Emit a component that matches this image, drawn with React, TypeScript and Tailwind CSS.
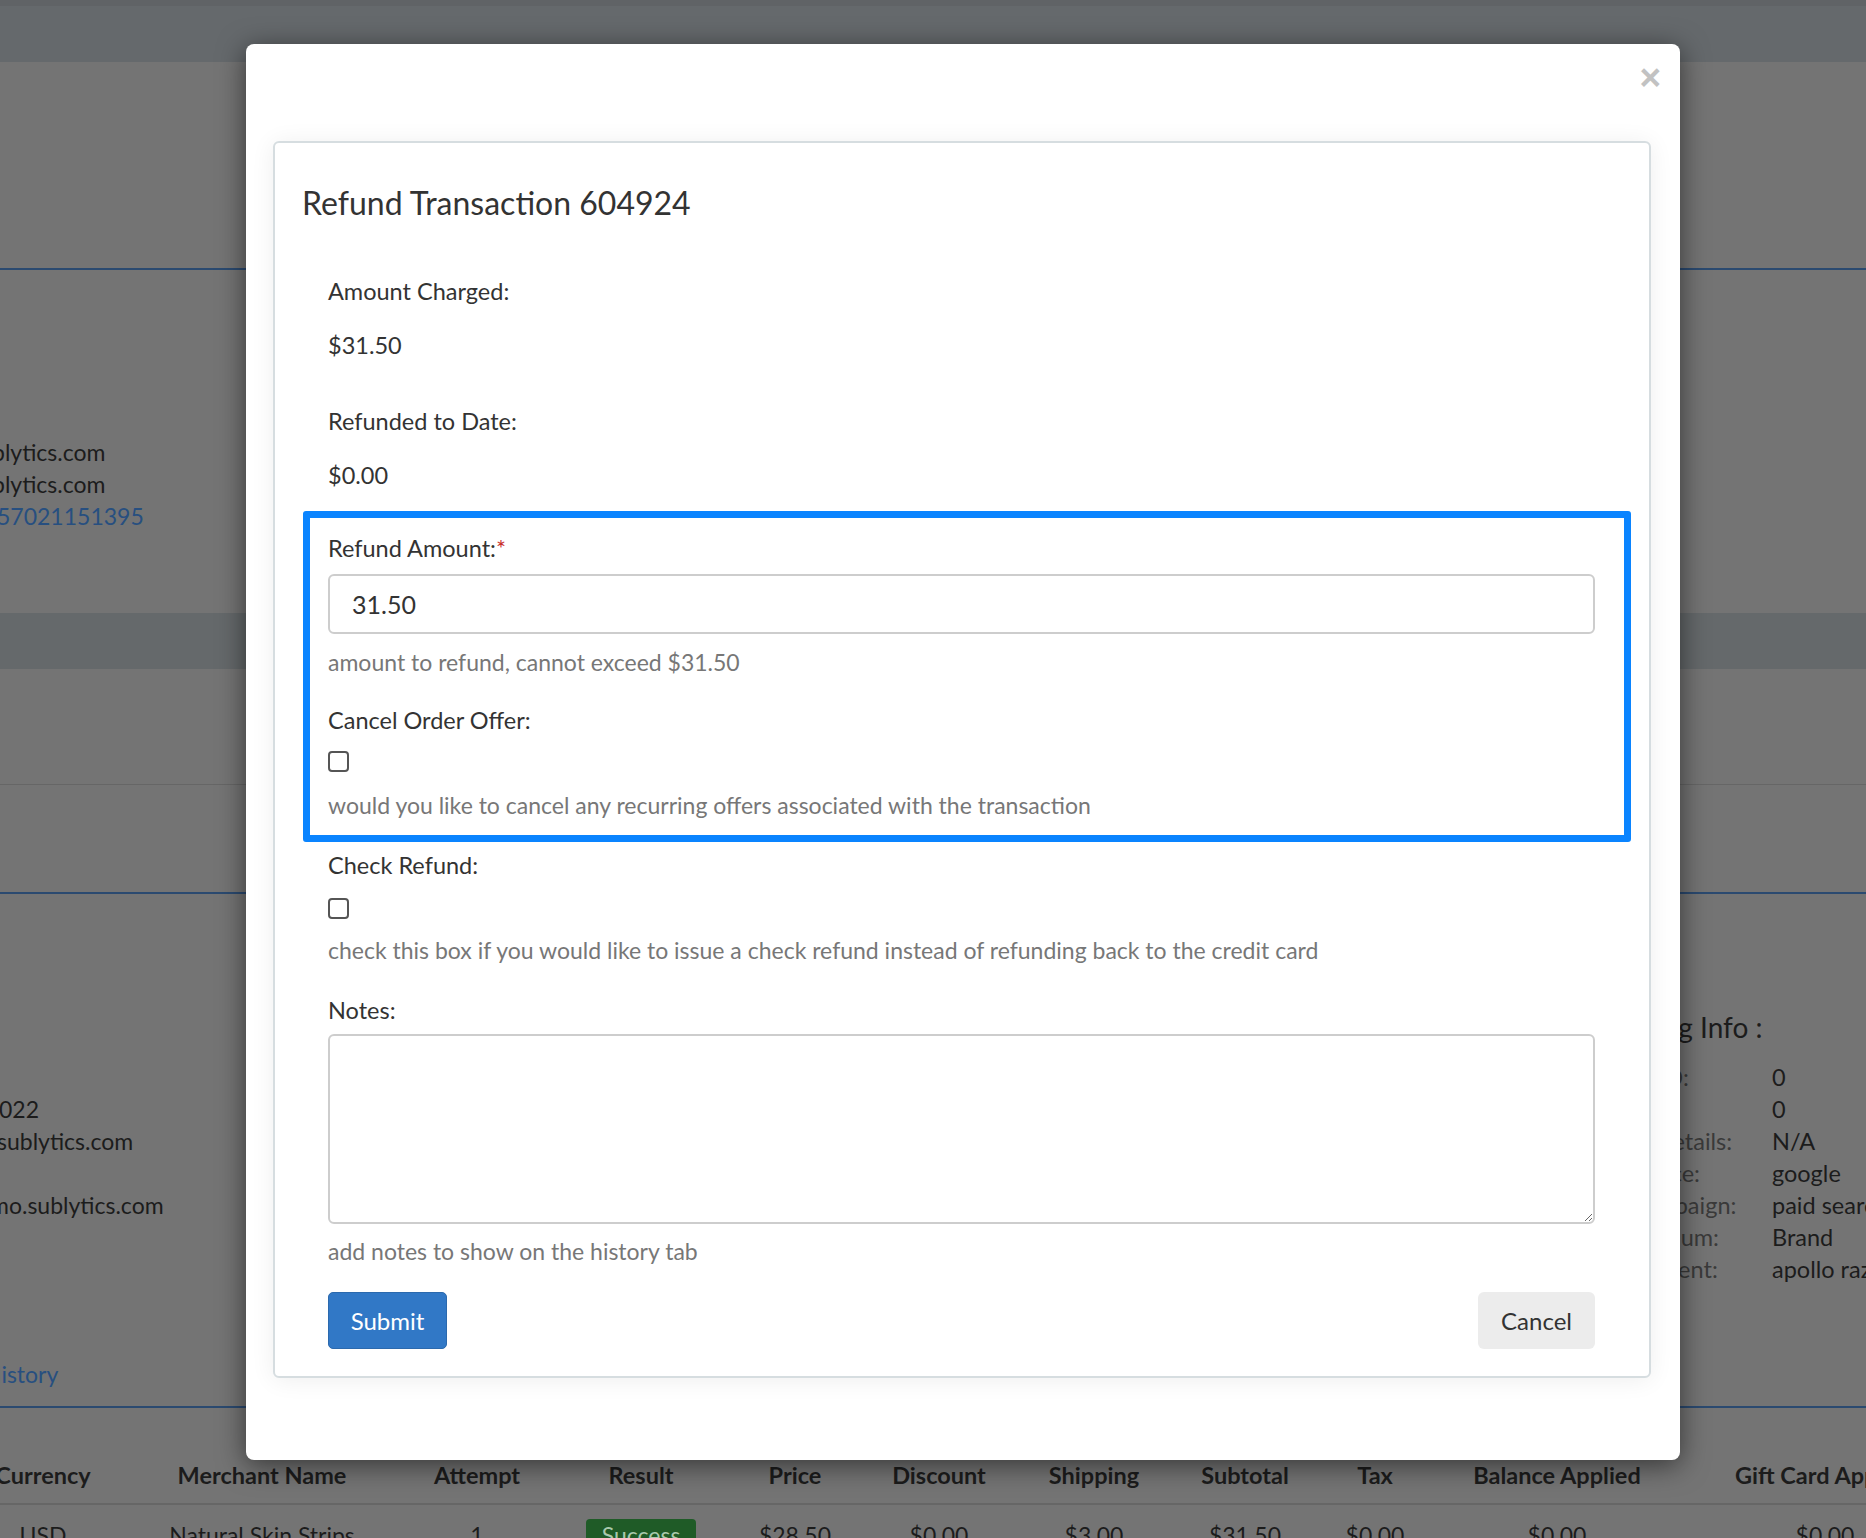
import React from "react";

const trackingRows: [string, string][] = [
  ["Referrer ID:", "0"],
  ["Sub ID:", "0"],
  ["Affiliate Details:", "N/A"],
  ["Lead Source:", "google"],
  ["UTM Campaign:", "paid search"],
  ["UTM Medium:", "Brand"],
  ["UTM Content:", "apollo razor"],
];

const columns: { title: string; value: string; w: string }[] = [
  { title: "Currency", value: "USD", w: "w-[218px]" },
  { title: "Merchant Name", value: "Natural Skin Strips", w: "w-[220px]" },
  { title: "Attempt", value: "1", w: "w-[210px]" },
  { title: "Result", value: "Success", w: "w-[118px]" },
  { title: "Price", value: "$28.50", w: "w-[190px]" },
  { title: "Discount", value: "$0.00", w: "w-[98px]" },
  { title: "Shipping", value: "$3.00", w: "w-[212px]" },
  { title: "Subtotal", value: "$31.50", w: "w-[90px]" },
  { title: "Tax", value: "$0.00", w: "w-[170px]" },
  { title: "Balance Applied", value: "$0.00", w: "w-[194px]" },
  { title: "Gift Card Applied", value: "$0.00", w: "w-[342px]" },
];

function BackgroundPage() {
  return (
    <div className="flex flex-col text-[23px] leading-[32px] text-[#1c1c1c]">
      <div className="h-[62px] border-t-[6px] border-[#606366] bg-[#65696c]" />
      <div className="h-[208px] border-b-2 border-[#2b4a70]" />

      <div className="h-[343px] pt-[166px]">
        <div className="-ml-[8px]">blytics.com</div>
        <div className="-ml-[8px]">blytics.com</div>
        <div className="-ml-[3px] text-[#274f80]">57021151395</div>
      </div>

      <div className="h-[56px] bg-[#65696b]" />
      <div className="h-[116px] border-b border-[#666666]" />
      <div className="h-[109px] border-b-2 border-[#2b4a70]" />

      <div className="flex border-b-2 border-[#2b4a70]">
        <div className="flex-1 pt-[199px] pb-[16px]">
          <div className="-ml-[1px]">022</div>
          <div className="-ml-[3px]">sublytics.com</div>
          <div className="h-[32px]" />
          <div className="-ml-[10px]">mo.sublytics.com</div>
          <div className="mt-[137px] -ml-[16px] text-[#274f80]">History</div>
        </div>
        <div className="w-[297px] pt-[115px]">
          <div className="ml-[22px] whitespace-nowrap text-[28px] leading-[36px]">Tracking Info :</div>
          <div className="mt-[16px] text-[23.5px] leading-[32px]">
            {trackingRows.map(([label, value]) => (
              <div key={label} className="flex">
                <div className="w-[203px] shrink-0 whitespace-nowrap text-[#3a3a3a]">{label}</div>
                <div className="whitespace-nowrap">{value}</div>
              </div>
            ))}
          </div>
        </div>
      </div>

      <div className="-ml-[66px] mt-[51px] flex border-b-2 border-[#666666] pb-[12px] text-[23.5px] font-bold">
        {columns.map((c) => (
          <div key={c.title} className={`${c.w} shrink-0 whitespace-nowrap text-center`}>
            {c.title}
          </div>
        ))}
      </div>
      <div className="-ml-[66px] flex pt-[14px]">
        {columns.map((c) => (
          <div key={c.title} className={`${c.w} flex shrink-0 justify-center whitespace-nowrap`}>
            {c.value === "Success" ? (
              <span className="h-[36px] rounded-[4px] bg-[#1f5b27] px-[16px] text-[#a9c9ad]">
                Success
              </span>
            ) : (
              <span>{c.value}</span>
            )}
          </div>
        ))}
      </div>
    </div>
  );
}

function Label({ children }: { children: React.ReactNode }) {
  return <div className="text-[23.5px] leading-[32px] text-[#333333]">{children}</div>;
}

function Help({ children, className = "" }: { children: React.ReactNode; className?: string }) {
  return (
    <div className={`text-[23px] leading-[32px] text-[#777777] ${className}`}>{children}</div>
  );
}

function Checkbox({ className = "" }: { className?: string }) {
  return (
    <input
      type="checkbox"
      className={`block h-[21px] w-[21px] appearance-none rounded-[4px] border-2 border-[#555555] bg-white ${className}`}
    />
  );
}

function RefundModal() {
  return (
    <div className="absolute left-[246px] top-[44px] w-[1434px] rounded-[8px] bg-white pb-[82px] pl-[27px] pr-[29px] shadow-[0_5px_28px_rgba(0,0,0,0.55)]">
      <div className="-mr-[10px] flex h-[97px] items-start justify-end pt-[15px]">
        <span className="font-['Liberation_Sans',sans-serif] text-[37px] font-bold leading-none text-[#c2c2c2]">
          ×
        </span>
      </div>

      <div className="rounded-[6px] border-2 border-[#d6dde0] bg-white pb-[27px] pl-[27px] pr-[27px] pt-[40px] shadow-[0_2px_24px_rgba(0,0,0,0.07)]">
        <h3 className="text-[32px] leading-[40px] text-[#333333]">Refund Transaction 604924</h3>

        <div className="pl-[26px] pr-[27px]">
          <div className="mt-[52px]">
            <Label>Amount Charged:</Label>
          </div>
          <div className="mt-[22px] text-[23.5px] leading-[32px] text-[#333333]">$31.50</div>

          <div className="mt-[44px]">
            <Label>Refunded to Date:</Label>
          </div>
          <div className="mt-[22px] text-[23.5px] leading-[32px] text-[#333333]">$0.00</div>

          <div className="-ml-[25px] -mr-[36px] mt-[20px] rounded-[3px] border-[7px] border-[#0a84ff] pb-[14px] pl-[18px] pr-[29px] pt-[14px]">
            <Label>
              Refund Amount:<span className="text-[#c9302c]">*</span>
            </Label>
            <input
              defaultValue="31.50"
              className="mt-[10px] block h-[60px] w-full rounded-[6px] border-2 border-[#cdcdcd] px-[22px] text-[25px] text-[#333333] outline-none"
            />
            <Help className="mt-[12px]">amount to refund, cannot exceed $31.50</Help>

            <div className="mt-[26px]">
              <Label>Cancel Order Offer:</Label>
            </div>
            <Checkbox className="mt-[15px]" />
            <Help className="mt-[17px]">
              would you like to cancel any recurring offers associated with the transaction
            </Help>
          </div>

          <div className="mt-[7px]">
            <Label>Check Refund:</Label>
          </div>
          <Checkbox className="mt-[17px]" />
          <Help className="mt-[15px]">
            check this box if you would like to issue a check refund instead of refunding back to
            the credit card
          </Help>

          <div className="mt-[28px]">
            <Label>Notes:</Label>
          </div>
          <textarea className="mt-[8px] block h-[190px] w-full rounded-[6px] border-2 border-[#cdcdcd] outline-none" />
          <Help className="mt-[11px]">add notes to show on the history tab</Help>

          <div className="mt-[25px] flex justify-between">
            <button className="h-[57px] w-[119px] rounded-[5px] border border-[#2b69ad] bg-[#3178c6] text-[24px] text-white">
              Submit
            </button>
            <button className="h-[57px] w-[117px] rounded-[6px] bg-[#ececec] text-[24px] text-[#333333]">
              Cancel
            </button>
          </div>
        </div>
      </div>
    </div>
  );
}

export default function App() {
  return (
    <div className="relative h-[1538px] w-[1866px] overflow-hidden bg-[#747474] font-['Lato','Liberation_Sans',sans-serif]">
      <BackgroundPage />
      <RefundModal />
    </div>
  );
}
